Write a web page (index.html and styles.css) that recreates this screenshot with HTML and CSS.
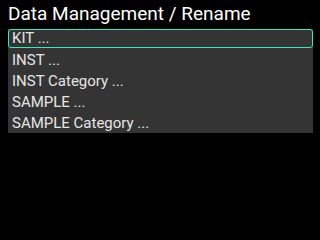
FILE: index.html
```html
<!DOCTYPE html>
<html lang="en">
<head>
    <meta charset="UTF-8">
    <title>Data Management / Rename</title>
    <link rel="stylesheet" href="styles.css">
</head>
<body>
    <div class="screen">
        <p class="screen-title">Data Management / Rename</p>
        <ul class="menu-list">
            <li class="menu-item selected">KIT ...</li>
            <li class="menu-item">INST ...</li>
            <li class="menu-item">INST Category ...</li>
            <li class="menu-item">SAMPLE ...</li>
            <li class="menu-item">SAMPLE Category ...</li>
        </ul>
    </div>
</body>
</html>
```

FILE: styles.css
```css
body {
    margin: 0;
    padding: 0;
    background: #000000;
    font-family: Roboto, "Liberation Sans", sans-serif;
}

.screen {
    width: 320px;
    height: 240px;
    padding: 0 7px 0 8px;
    box-sizing: border-box;
}

.screen-title {
    margin: 0;
    height: 28px;
    line-height: 28px;
    font-size: 19px;
    color: #ffffff;
}

.menu-list {
    list-style: none;
    margin: 0;
    padding: 0;
    background: #343434;
}

.menu-item {
    height: 21px;
    line-height: 19px;
    padding: 2px 0 0 4px;
    font-size: 15px;
    color: #e6e6e6;
    box-sizing: border-box;
}

.menu-item.selected {
    border: 1px solid #3ee6c0;
    border-radius: 3px;
    height: 19px;
    line-height: 17px;
    margin: 1px 0;
    padding: 0 0 0 3px;
}
```
